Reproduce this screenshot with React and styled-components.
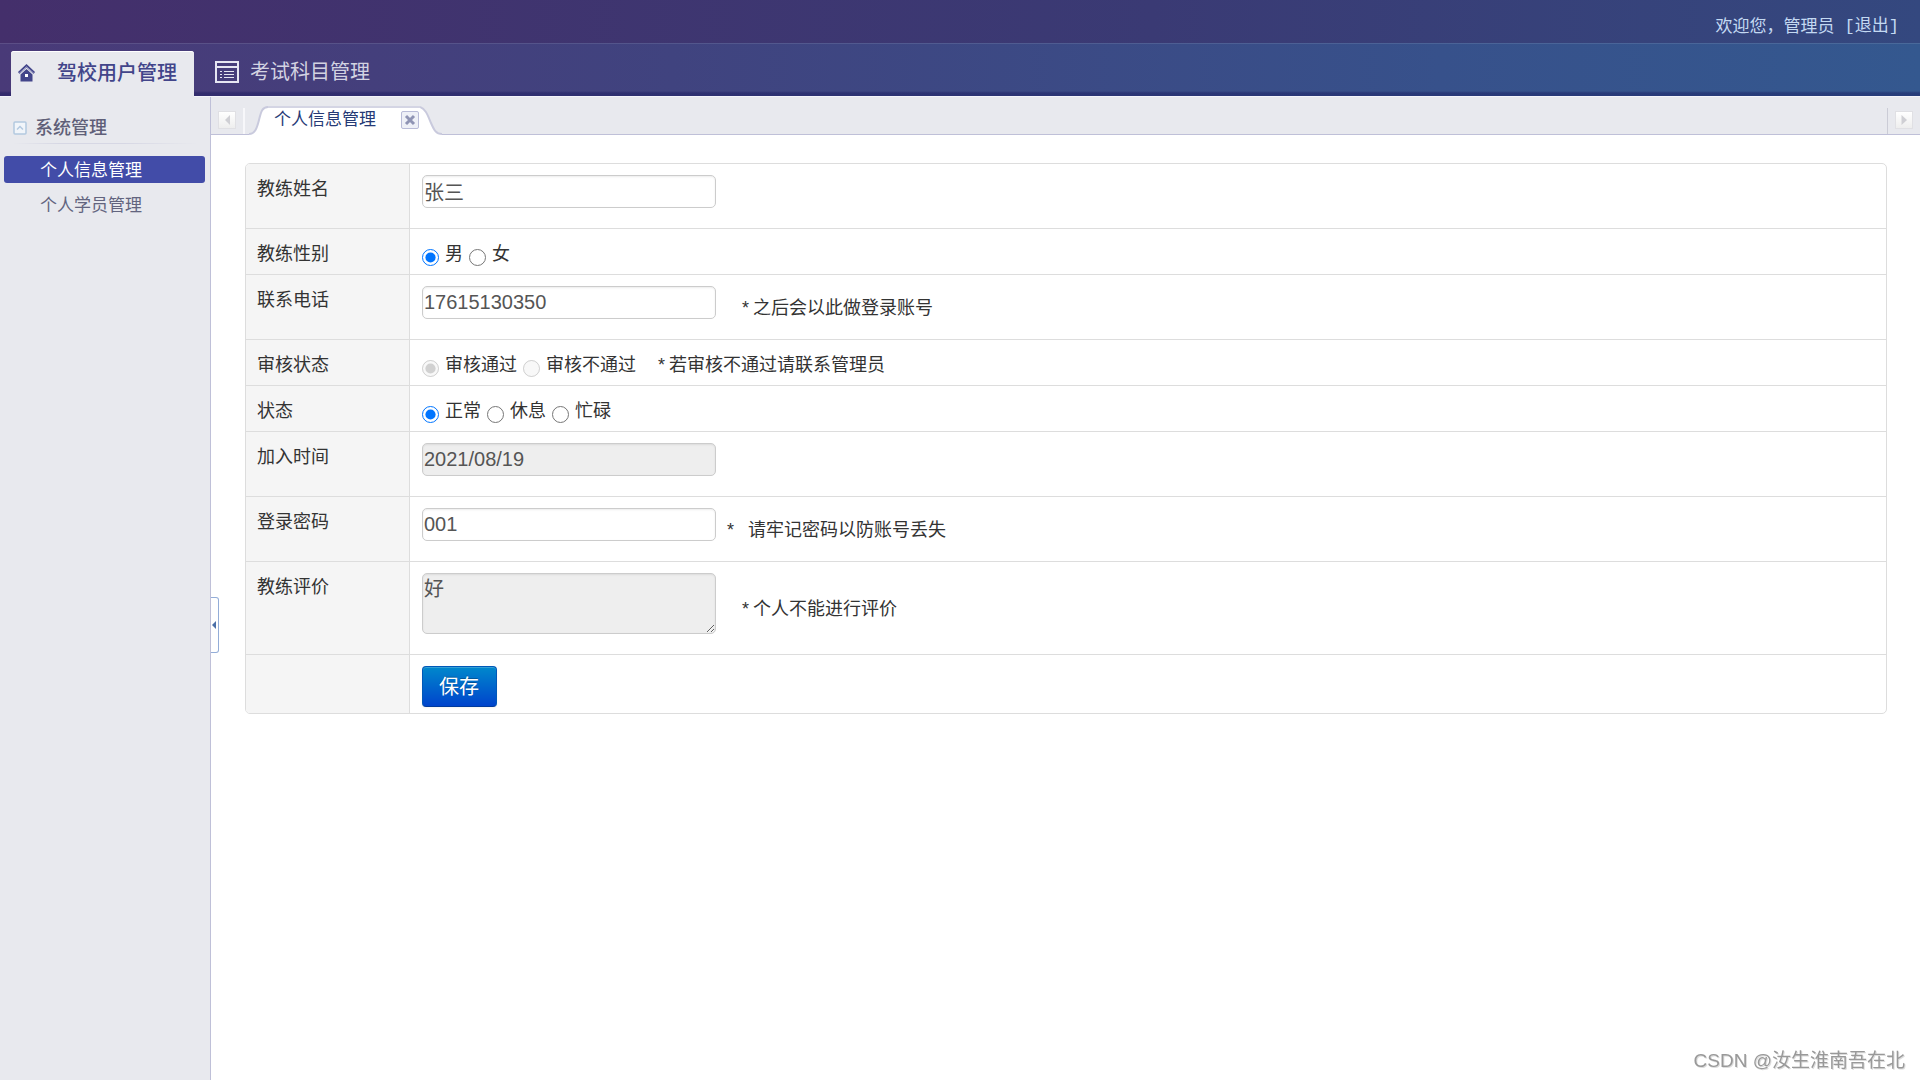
import React from "react";
import styled, { createGlobalStyle } from "styled-components";

const GlobalStyle = createGlobalStyle`
  * { box-sizing: border-box; }
  body {
    margin: 0;
    background: #fff;
    color: #333;
    font-family: "Liberation Sans", "Noto Sans CJK SC", sans-serif;
    font-size: 18px;
  }
  input, textarea, button { font-family: inherit; }
`;

const Page = styled.div`
  display: flex;
  flex-direction: column;
  min-height: 100vh;
`;

const TopBar = styled.header`
  display: flex;
  justify-content: flex-end;
  align-items: center;
  gap: 10px;
  height: 43px;
  padding: 10px 21px 0 0;
  background: linear-gradient(90deg, #442f6b 0%, #3a3a74 60%, #34487f 100%);
  color: #c3d9f2;
  font-size: 17px;
  line-height: 24px;
`;

const LogoutLink = styled.a`
  color: inherit;
  text-decoration: none;
  font-family: "Liberation Mono", "Noto Sans CJK SC", monospace;
`;

const NavBar = styled.nav`
  display: flex;
  align-items: flex-end;
  height: 54px;
  padding-left: 11px;
  background:
    linear-gradient(180deg, rgba(255, 255, 255, 0.1) 0 1px, transparent 1px 48px, rgba(20, 20, 90, 0.4) 50px 53px, #f4f4fb 53px),
    linear-gradient(90deg, #493a78 0%, #40437f 35%, #37518b 75%, #34588f 100%);
`;

const NavLink = styled.a`
  display: flex;
  align-items: center;
  height: 46px;
  padding: ${(p) => (p.$active ? "0 17px 2px 6px" : "0 16px 4px 21px")};
  gap: ${(p) => (p.$active ? "21px" : "11px")};
  border-radius: 3px 3px 0 0;
  background: ${(p) => (p.$active ? "#e8e9ee" : "transparent")};
  color: ${(p) => (p.$active ? "#42458a" : "#d3d3e2")};
  box-shadow: ${(p) => (p.$active ? "inset 0 1px 0 #fff" : "none")};
  font-size: 20px;
  line-height: 28px;
  font-weight: ${(p) => (p.$active ? 500 : 400)};
  text-decoration: none;
`;

const Body = styled.div`
  display: flex;
  flex: 1;
`;

const Sidebar = styled.aside`
  flex: 0 0 211px;
  padding: 18px 5px 0 4px;
  background: #e8e9ee;
  border-right: 1px solid #bfc0d8;
`;

const GroupTitle = styled.h2`
  display: flex;
  align-items: center;
  gap: 8px;
  margin: 0 8px 12px 9px;
  height: 29px;
  padding-bottom: 4px;
  background: linear-gradient(90deg, transparent, #d6d7e4 25%, #d6d7e4 60%, transparent) bottom / 100% 1px no-repeat;
  color: #5f5f78;
  font-size: 18px;
  line-height: 24px;
  font-weight: 500;
`;

const MenuList = styled.ul`
  display: flex;
  flex-direction: column;
  gap: 8px;
  margin: 0;
  padding: 0;
  list-style: none;
`;

const MenuLink = styled.a`
  display: block;
  padding: 2px 0 0 36px;
  border-radius: 3px;
  background: ${(p) => (p.$active ? "#424ca8" : "transparent")};
  color: ${(p) => (p.$active ? "#fff" : "#62647e")};
  font-size: 17px;
  line-height: 25px;
  text-decoration: none;
`;

const Main = styled.main`
  position: relative;
  flex: 1;
  min-width: 0;
  background: #fff;
`;

const TabStrip = styled.div`
  display: flex;
  align-items: flex-end;
  height: 38px;
  background: #e8e9ee;
  border-bottom: 1px solid #bfc0d8;
`;

const ScrollCell = styled.div`
  display: flex;
  justify-content: center;
  align-items: center;
  width: ${(p) => (p.$side === "left" ? "34px" : "33px")};
  height: 26px;
  margin-left: ${(p) => (p.$side === "left" ? "0" : "auto")};
  padding-bottom: 2px;
  border-right: ${(p) => (p.$side === "left" ? "2px solid #f7f7fa" : "0")};
  border-left: ${(p) => (p.$side === "right" ? "1px solid #cbccd6" : "0")};
`;

const ScrollButton = styled.button`
  display: flex;
  width: 18px;
  height: 18px;
  padding: 0;
  border: 1px solid #e0e0e4;
  background: linear-gradient(#fff, #eee);
`;

const Tab = styled.div`
  display: flex;
  height: 29px;
  margin: 0 0 -1px 4px;
`;

const TabFace = styled.div`
  display: flex;
  align-items: center;
  gap: 25px;
  padding: 0 1px 4px 6px;
  border-top: 2px solid #d4d5e4;
  background: #fff;
  color: #263a76;
  font-size: 17px;
  line-height: 24px;
`;

const CloseButton = styled.button`
  display: flex;
  width: 18px;
  height: 18px;
  padding: 0;
  border: 1px solid #b9bcd8;
  border-radius: 2px;
  background: #eef0f7;
`;

const CollapseHandle = styled.button`
  position: absolute;
  left: 0;
  top: 500px;
  display: flex;
  align-items: center;
  width: 8px;
  height: 56px;
  padding: 0;
  border: 1px solid #93add8;
  border-left: 0;
  border-radius: 0 3px 3px 0;
  background: #fff;
`;

const Form = styled.form`
  padding: 28px 33px 28px 34px;
`;

const FormTable = styled.table`
  width: 100%;
  border: 1px solid #ddd;
  border-radius: 5px;
  border-collapse: separate;
  border-spacing: 0;
  overflow: hidden;
  line-height: 28px;

  tr:not(:first-child) > * { border-top: 1px solid #ddd; }
`;

const LabelCell = styled.th`
  width: 164px;
  padding: 11px 12px 6px 11px;
  border-right: 1px solid #ddd;
  background: #f5f5f5;
  text-align: left;
  vertical-align: top;
  font-weight: 400;
`;

const ValueCell = styled.td`
  padding: 11px 12px 6px;
`;

const Field = styled.div`
  display: flex;
  align-items: center;
  margin-bottom: 14px;
`;

const TextInput = styled.input`
  width: 294px;
  height: 33px;
  padding: 0 1px;
  border: 1px solid #ccc;
  border-radius: 5px;
  background: ${(p) => (p.readOnly ? "#eee" : "#fff")};
  box-shadow: inset 0 1px 2px rgba(0, 0, 0, 0.08);
  color: #555;
  font-size: 20px;
  outline: 0;
`;

const TextArea = styled.textarea`
  display: block;
  width: 294px;
  height: 61px;
  padding: 1px;
  border: 1px solid #ccc;
  border-radius: 5px;
  background: #eee;
  box-shadow: inset 0 1px 2px rgba(0, 0, 0, 0.08);
  color: #555;
  font-size: 20px;
  line-height: 28px;
  outline: 0;
`;

const Hint = styled.span`
  display: flex;
  gap: ${(p) => p.$gap || 4}px;
  padding: 10px 0 0 ${(p) => p.$indent || 26}px;
  line-height: 22px;
`;

const RadioRow = styled.div`
  display: flex;
  align-items: center;
  gap: 6px;
`;

const RadioLabel = styled.label`
  display: flex;
  align-items: center;
  gap: 6px;
`;

const Radio = styled.input`
  width: 17px;
  height: 17px;
  margin: 6px 0 0;
  accent-color: #0075ff;
`;

const InlineHint = styled.span`
  display: flex;
  gap: 4px;
  padding-left: 16px;
`;

const SaveButton = styled.button`
  display: block;
  height: 41px;
  padding: 0 17px 0 16px;
  border: 1px solid #0058b8;
  border-bottom-color: #003a9c;
  border-radius: 4px;
  background: linear-gradient(#0088cc, #0044cc);
  box-shadow: inset 0 1px 0 rgba(255, 255, 255, 0.2), 0 1px 2px rgba(0, 0, 0, 0.05);
  color: #fff;
  font-size: 20px;
  line-height: 28px;
  text-shadow: 0 -1px 0 rgba(0, 0, 0, 0.25);
`;

const Watermark = styled.div`
  position: fixed;
  right: 15px;
  bottom: 5px;
  color: #999;
  font-size: 19px;
  line-height: 28px;
  text-shadow: 1px 1px 0 #ddd;
`;

const HomeIcon = () => (
  <svg width="19" height="18" viewBox="0 0 19 18" aria-hidden="true">
    <path d="M9.500 0 L18 8 L16.500 10 L9.500 3.500 L2.500 10 L1 8 Z" fill="#42458a" />
    <path d="M9.500 5 L15.500 10.500 V17.500 H3.500 V10.500 Z" fill="#42458a" />
    <path d="M2 9.500 L9.500 2.800 L17 9.500" fill="none" stroke="#a5a7cc" />
    <rect x="8" y="10" width="3" height="3" fill="#fff" />
  </svg>
);

const ListIcon = () => (
  <svg width="24" height="22" viewBox="0 0 24 22" fill="none" stroke="#e6e6f2" aria-hidden="true">
    <rect x="1" y="1" width="22" height="20" strokeWidth="2" />
    <path d="M2 6 H22" strokeWidth="2" />
    <path d="M5 10.500 H7 M5 13.500 H7 M5 16.500 H7 M9 10.500 H19 M9 13.500 H19 M9 16.500 H19" />
  </svg>
);

const FoldIcon = () => (
  <svg width="14" height="14" viewBox="0 0 14 14" fill="none" aria-hidden="true">
    <rect x="1" y="1" width="12" height="12" rx="1" fill="#f1f5fa" stroke="#b3c9e0" strokeWidth="1.500" />
    <path d="M4 8.500 L7 5.500 L10 8.500" stroke="#b3c9e0" strokeWidth="1.500" />
  </svg>
);

const Arrow = ({ dir }) => (
  <svg width="16" height="16" viewBox="0 0 16 16" aria-hidden="true">
    <path d={dir === "left" ? "M11 3 V13 L6 8 Z" : "M5.500 3 V13 L11 8 Z"} fill="#cfcfd4" />
  </svg>
);

const CrossIcon = () => (
  <svg width="16" height="16" viewBox="0 0 16 16" aria-hidden="true">
    <path d="M4 4 L12 12 M12 4 L4 12" stroke="#8f94b4" strokeWidth="3" />
  </svg>
);

const TabLeftEdge = () => (
  <svg width="19" height="29" viewBox="0 0 19 29" aria-hidden="true">
    <path d="M0 28 C6 28 8 22 10 14 C12 6 13 1 19 1 V29 H0 Z" fill="#fff" />
    <path d="M0 28 C6 28 8 22 10 14 C12 6 13 1 19 1" fill="none" stroke="#c9cadd" strokeWidth="2" />
  </svg>
);

const TabRightEdge = () => (
  <svg width="22" height="29" viewBox="0 0 22 29" aria-hidden="true">
    <path d="M0 1 C6 3 8 10 11 17 C14 24 16 28 22 28 V29 H0 Z" fill="#fff" />
    <path d="M0 1 C6 3 8 10 11 17 C14 24 16 28 22 28" fill="none" stroke="#c9cadd" strokeWidth="2" />
  </svg>
);

const RadioGroup = ({ name, options, value, disabled, children }) => (
  <RadioRow role="radiogroup">
    {options.map((option) => (
      <RadioLabel key={option}>
        <Radio type="radio" name={name} value={option} defaultChecked={option === value} disabled={disabled} />
        {option}
      </RadioLabel>
    ))}
    {children}
  </RadioRow>
);

const Row = ({ label, htmlFor, children }) => (
  <tr>
    <LabelCell scope="row">{htmlFor ? <label htmlFor={htmlFor}>{label}</label> : label}</LabelCell>
    <ValueCell>{children}</ValueCell>
  </tr>
);

export default function App() {
  return (
    <Page>
      <GlobalStyle />
      <TopBar>
        <span>欢迎您，管理员</span>
        <LogoutLink href="#logout">[退出]</LogoutLink>
      </TopBar>
      <NavBar>
        <NavLink href="#users" $active>
          <HomeIcon />
          驾校用户管理
        </NavLink>
        <NavLink href="#subjects">
          <ListIcon />
          考试科目管理
        </NavLink>
      </NavBar>
      <Body>
        <Sidebar>
          <GroupTitle>
            <FoldIcon />
            系统管理
          </GroupTitle>
          <MenuList>
            <li><MenuLink href="#profile" $active>个人信息管理</MenuLink></li>
            <li><MenuLink href="#students">个人学员管理</MenuLink></li>
          </MenuList>
        </Sidebar>
        <Main>
          <TabStrip>
            <ScrollCell $side="left">
              <ScrollButton type="button" aria-label="left"><Arrow dir="left" /></ScrollButton>
            </ScrollCell>
            <Tab>
              <TabLeftEdge />
              <TabFace>
                个人信息管理
                <CloseButton type="button" aria-label="close"><CrossIcon /></CloseButton>
              </TabFace>
              <TabRightEdge />
            </Tab>
            <ScrollCell $side="right">
              <ScrollButton type="button" aria-label="right"><Arrow dir="right" /></ScrollButton>
            </ScrollCell>
          </TabStrip>
          <CollapseHandle type="button" aria-label="collapse">
            <svg width="6" height="10" viewBox="0 0 6 10" aria-hidden="true">
              <path d="M5 1 V9 L1 5 Z" fill="#4a6fa8" />
            </svg>
          </CollapseHandle>
          <Form>
            <FormTable>
              <tbody>
                <Row label="教练姓名" htmlFor="name">
                  <Field><TextInput id="name" defaultValue="张三" /></Field>
                </Row>
                <Row label="教练性别">
                  <RadioGroup name="gender" options={["男", "女"]} value="男" />
                </Row>
                <Row label="联系电话" htmlFor="phone">
                  <Field>
                    <TextInput id="phone" defaultValue="17615130350" />
                    <Hint><span>*</span>之后会以此做登录账号</Hint>
                  </Field>
                </Row>
                <Row label="审核状态">
                  <RadioGroup name="review" options={["审核通过", "审核不通过"]} value="审核通过" disabled>
                    <InlineHint><span>*</span>若审核不通过请联系管理员</InlineHint>
                  </RadioGroup>
                </Row>
                <Row label="状态">
                  <RadioGroup name="status" options={["正常", "休息", "忙碌"]} value="正常" />
                </Row>
                <Row label="加入时间" htmlFor="joined">
                  <Field><TextInput id="joined" defaultValue="2021/08/19" readOnly /></Field>
                </Row>
                <Row label="登录密码" htmlFor="password">
                  <Field>
                    <TextInput id="password" defaultValue="001" />
                    <Hint $indent={11} $gap={14}><span>*</span>请牢记密码以防账号丢失</Hint>
                  </Field>
                </Row>
                <Row label="教练评价" htmlFor="comment">
                  <Field>
                    <TextArea id="comment" defaultValue="好" readOnly />
                    <Hint><span>*</span>个人不能进行评价</Hint>
                  </Field>
                </Row>
                <Row label="">
                  <SaveButton type="button">保存</SaveButton>
                </Row>
              </tbody>
            </FormTable>
          </Form>
        </Main>
      </Body>
      <Watermark>CSDN @汝生淮南吾在北</Watermark>
    </Page>
  );
}
